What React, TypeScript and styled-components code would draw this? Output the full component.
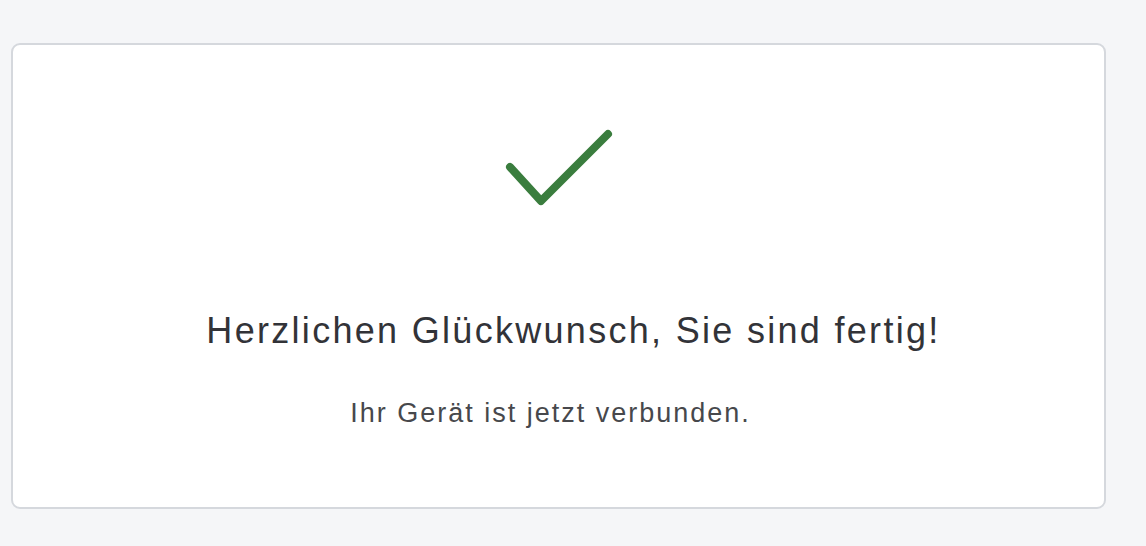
import React from "react";
import styled, { createGlobalStyle } from "styled-components";

const GlobalStyle = createGlobalStyle`
  html, body {
    margin: 0;
    padding: 0;
    background: #f5f6f8;
    font-family: "Liberation Sans", Arial, sans-serif;
  }
`;

const Page = styled.div`
  padding: 43px 40px 36px 11px;
  min-height: 546px;
  box-sizing: border-box;
`;

const Card = styled.div`
  background: #ffffff;
  border: 2px solid #d5d8dd;
  border-radius: 9px;
  height: 466px;
  box-sizing: border-box;
  display: flex;
  flex-direction: column;
  align-items: center;
`;

const IconWrap = styled.div`
  margin-top: 83px;
  width: 120px;
  height: 90px;
  display: flex;
  justify-content: center;
`;

const Title = styled.h1`
  margin: 91px 0 0 30px;
  font-size: 36px;
  font-weight: 400;
  letter-spacing: 2.3px;
  color: #323338;
  line-height: 44px;
`;

const Subtitle = styled.p`
  margin: 44px 16px 0 0;
  font-size: 27px;
  letter-spacing: 2px;
  color: #47484c;
  line-height: 32px;
`;

export default function App() {
  return (
    <>
      <GlobalStyle />
      <Page>
        <Card>
          <IconWrap>
            <svg width="120" height="90" viewBox="0 0 120 90">
              <polyline
                points="11,39 42,73 109,6"
                fill="none"
                stroke="#3a7d3e"
                strokeWidth="8"
                strokeLinecap="round"
                strokeLinejoin="round"
              />
            </svg>
          </IconWrap>
          <Title>Herzlichen Glückwunsch, Sie sind fertig!</Title>
          <Subtitle>Ihr Gerät ist jetzt verbunden.</Subtitle>
        </Card>
      </Page>
    </>
  );
}
